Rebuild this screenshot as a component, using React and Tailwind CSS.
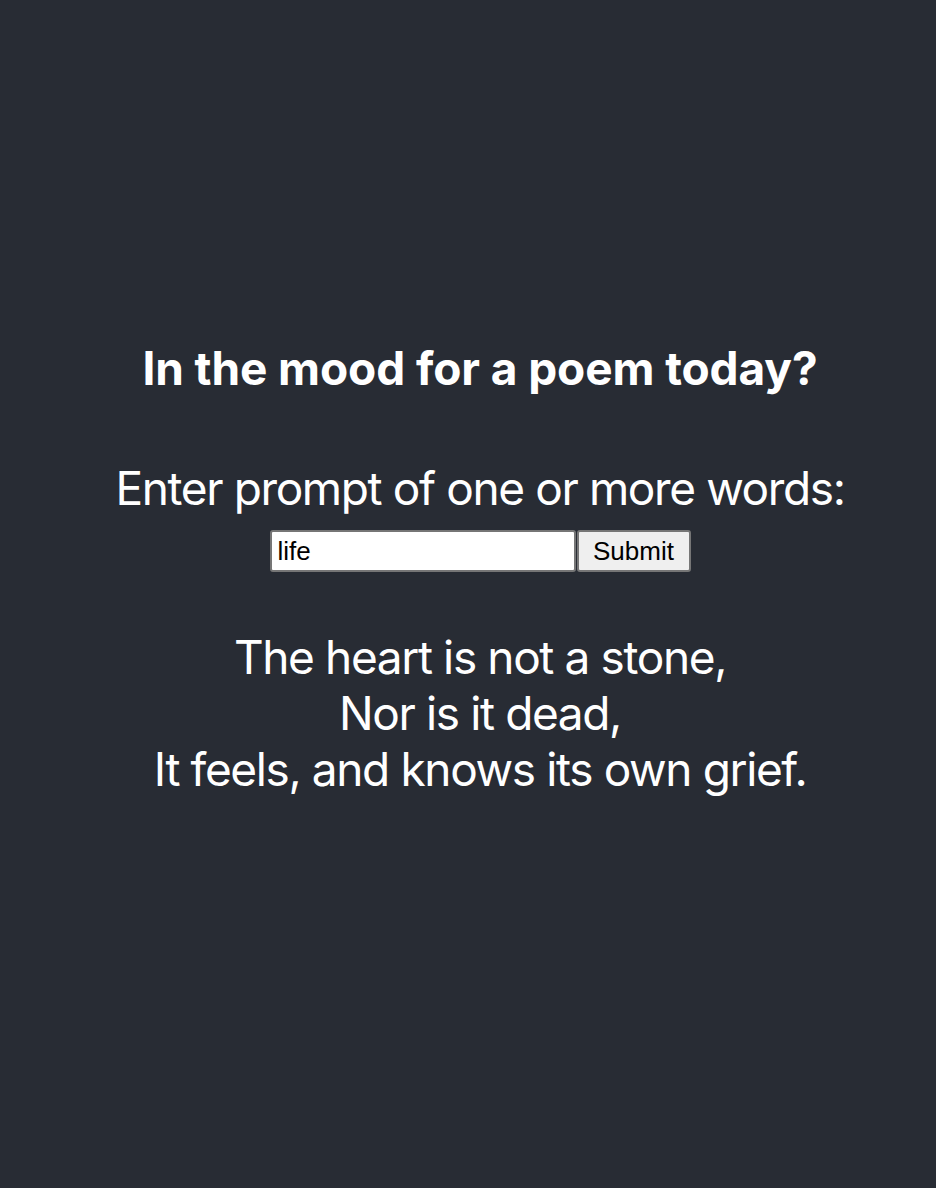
export default function App() {
  return (
    <div className="min-h-[1188px] bg-[#282c34] flex flex-col items-center pt-[340px] pl-[24px] text-white text-center" style={{ fontFamily: "Inter, 'Noto Sans', sans-serif" }}>
      <h1 className="text-[46px] font-bold leading-[56px] tracking-[-0.002em] m-0">In the mood for a poem today?</h1>
      <p className="text-[46px] leading-[56px] tracking-[-0.03em] mt-[64px]">Enter prompt of one or more words:</p>
      <form className="flex items-center mt-[14px]" onSubmit={(e) => e.preventDefault()}>
        <input
          type="text"
          defaultValue="life"
          className="w-[306px] h-[42px] bg-white text-black border-2 border-[#767676] rounded-[3px] px-[6px] text-[26px] outline-none"
          style={{ fontFamily: "'Liberation Sans', Arial, sans-serif" }}
        />
        <button
          type="submit"
          className="ml-px h-[42px] w-[114px] bg-[#efefef] text-black border-2 border-[#767676] rounded-[3px] text-[26px]"
          style={{ fontFamily: "'Liberation Sans', Arial, sans-serif" }}
        >
          Submit
        </button>
      </form>
      <div className="text-[46px] leading-[56px] tracking-[-0.03em] mt-[57px]">
        <p>The heart is not a stone,</p>
        <p>Nor is it dead,</p>
        <p>It feels, and knows its own grief.</p>
      </div>
    </div>
  );
}
